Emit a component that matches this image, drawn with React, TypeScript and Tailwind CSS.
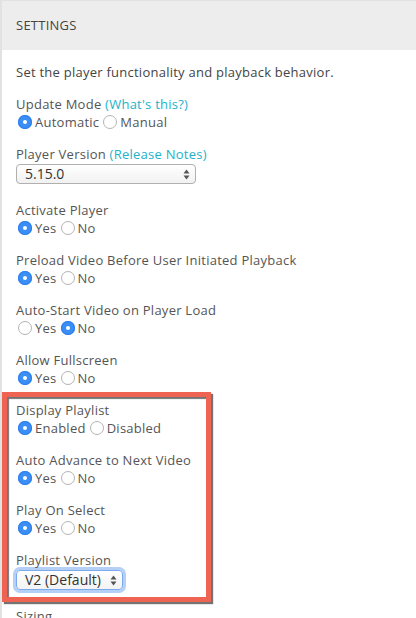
import type { ReactNode } from "react";

function Radio({ checked }: { checked?: boolean }) {
  if (checked) {
    return (
      <span className="ml-[2px] mr-[3px] flex h-[14px] w-[14px] shrink-0 items-center justify-center rounded-full bg-[#3a8ef5] shadow-[inset_0_0_0_1px_#2e7fe8]">
        <span className="h-[4px] w-[4px] rounded-full bg-white" />
      </span>
    );
  }
  return (
    <span className="ml-[2px] mr-[3px] h-[14px] w-[14px] shrink-0 rounded-full border border-[#b4b4b4] bg-white" />
  );
}

function RadioGroup({ options, value }: { options: string[]; value: string }) {
  return (
    <div className="flex h-[18px] items-center gap-[2px]">
      {options.map((o) => (
        <span key={o} className="flex items-center">
          <Radio checked={o === value} />
          <span>{o}</span>
        </span>
      ))}
    </div>
  );
}

function Arrows() {
  return (
    <svg width="7" height="11" viewBox="0 0 7 11" className="shrink-0">
      <path d="M3.5 0.5 L6.5 4.5 L0.5 4.5 Z" fill="#555" />
      <path d="M3.5 10.5 L6.5 6.5 L0.5 6.5 Z" fill="#555" />
    </svg>
  );
}

function Select({ value, width, focused }: { value: string; width: string; focused?: boolean }) {
  return (
    <div
      className={
        focused
          ? `mt-[1px] flex h-[20px] items-center justify-between rounded-[4px] border border-[#7aa9ec] bg-gradient-to-b from-white to-[#f3f3f3] pl-[8px] pr-[5px] text-[14px] tracking-normal text-[#333] shadow-[0_0_0_3px_rgba(120,170,240,0.55)] ${width}`
          : `mt-[1px] flex h-[20px] items-center justify-between rounded-[4px] border border-[#b0b0b0] bg-gradient-to-b from-white to-[#f1f1f1] pl-[8px] pr-[5px] text-[14px] tracking-normal text-[#333] ${width}`
      }
    >
      <span>{value}</span>
      <Arrows />
    </div>
  );
}

function Field({ label, link, children, select }: { label: string; link?: string; children?: ReactNode; select?: boolean }) {
  return (
    <div className={select ? "mb-[17px]" : "mb-[14px]"}>
      <div className="h-[18px]">
        {label}
        {link && <span className="text-[#22b2ca]"> {link}</span>}
      </div>
      {children}
    </div>
  );
}

export default function App() {
  return (
    <div className="h-[618px] w-[416px] overflow-hidden bg-white font-['Open_Sans',sans-serif] text-[13px] leading-[18px] tracking-[0.25px] text-[#555]">
      <div className="min-h-full border-l-2 border-t border-[#e2e2e2]">
        {/* header */}
        <div className="flex h-[49px] items-center bg-[#ededed] px-[14px] pb-[1px] text-[#444]">SETTINGS</div>

        <div className="px-[14px] pt-[13px]">
          <p className="mb-[14px] text-[#444]">Set the player functionality and playback behavior.</p>

          <Field label="Update Mode" link="(What's this?)">
            <RadioGroup options={["Automatic", "Manual"]} value="Automatic" />
          </Field>

          <Field label="Player Version" link="(Release Notes)" select>
            <Select value="5.15.0" width="w-[180px]" />
          </Field>

          <Field label="Activate Player">
            <RadioGroup options={["Yes", "No"]} value="Yes" />
          </Field>

          <Field label="Preload Video Before User Initiated Playback">
            <RadioGroup options={["Yes", "No"]} value="Yes" />
          </Field>

          <Field label="Auto-Start Video on Player Load">
            <RadioGroup options={["Yes", "No"]} value="No" />
          </Field>

          <Field label="Allow Fullscreen">
            <RadioGroup options={["Yes", "No"]} value="Yes" />
          </Field>

          {/* highlighted playlist settings */}
          <div className="relative">
            <div className="pointer-events-none absolute -left-[14px] -top-[9px] h-[210px] w-[209px] border-[5px] border-[#ee6352] shadow-[2px_2px_1px_rgba(0,0,0,0.55),inset_2px_2px_1px_rgba(0,0,0,0.55)]" />

            <Field label="Display Playlist">
              <RadioGroup options={["Enabled", "Disabled"]} value="Enabled" />
            </Field>

            <Field label="Auto Advance to Next Video">
              <RadioGroup options={["Yes", "No"]} value="Yes" />
            </Field>

            <Field label="Play On Select">
              <RadioGroup options={["Yes", "No"]} value="Yes" />
            </Field>

            <Field label="Playlist Version" select>
              <Select value="V2 (Default)" width="w-[107px]" focused />
            </Field>
          </div>

          <Field label="Sizing" />
        </div>
      </div>
    </div>
  );
}
